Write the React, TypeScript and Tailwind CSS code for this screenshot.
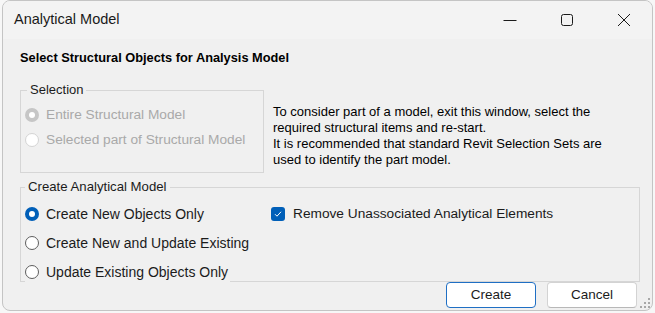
import { ReactNode } from "react";

const FONT = { fontFamily: '"Liberation Sans", Arial, sans-serif' };

function Radio({ checked, disabled }: { checked?: boolean; disabled?: boolean }) {
  if (checked) {
    return (
      <span
        className={`flex h-[14px] w-[14px] shrink-0 items-center justify-center rounded-full ${
          disabled ? "bg-[#c6c6c6]" : "bg-[#005fb8]"
        }`}
      >
        <span className="h-[6px] w-[6px] rounded-full bg-white" />
      </span>
    );
  }
  return (
    <span
      className={`h-[14px] w-[14px] shrink-0 rounded-full border bg-white ${
        disabled ? "border-[#d4d4d4]" : "border-[#5e5e5e]"
      }`}
    />
  );
}

function Option({ children, checked, disabled }: { children: ReactNode; checked?: boolean; disabled?: boolean }) {
  return (
    <div className="flex h-[20px] items-center gap-[7px]">
      <Radio checked={checked} disabled={disabled} />
      <span className={disabled ? "text-[13.7px] text-[#a9a9a9]" : "text-[14px] text-[#1b1b1b]"}>{children}</span>
    </div>
  );
}

export default function App() {
  return (
    <div className="h-[313px] w-[655px] bg-[#f7f7f7] px-[2px]" style={FONT}>
      <div className="relative h-[311px] overflow-hidden rounded-[8px] border border-[#c4c4c4] bg-[#f0f0f0]">
        {/* title bar */}
        <div className="flex h-[38px] items-center bg-[#f3f3f3]">
          <span className="flex-1 pl-[11px] text-[14.5px] text-[#1a1a1a]">Analytical Model</span>
          <div className="flex h-full">
            <div className="flex w-[57px] items-center justify-center">
              <svg width="14" height="14" viewBox="0 0 14 14">
                <path d="M0.5 7.5h13" stroke="#1a1a1a" strokeWidth="1" />
              </svg>
            </div>
            <div className="flex w-[57px] items-center justify-center">
              <svg width="14" height="14" viewBox="0 0 14 14">
                <rect x="1.5" y="1.5" width="11" height="11" rx="2" fill="none" stroke="#1a1a1a" strokeWidth="1" />
              </svg>
            </div>
            <div className="flex w-[57px] items-center justify-center">
              <svg width="14" height="14" viewBox="0 0 14 14">
                <path d="M1 1l12 12M13 1L1 13" stroke="#1a1a1a" strokeWidth="1" />
              </svg>
            </div>
          </div>
        </div>

        <div className="pl-[17px] pr-[12px] pt-[11px]">
          <h1 className="h-[16px] text-[12.8px] font-bold leading-[16px] text-black">
            Select Structural Objects for Analysis Model
          </h1>

          <div className="mt-[16px] flex items-start">
            <fieldset className="w-[244px] border border-[#d6d6d6] pb-[22px] pl-[4px] pt-[7px]">
              <legend className="ml-[2px] px-[3px] text-[13px] leading-[16px] text-[#1b1b1b]">Selection</legend>
              <div className="flex flex-col gap-[5px]">
                <Option checked disabled>
                  Entire Structural Model
                </Option>
                <Option disabled>Selected part of Structural Model</Option>
              </div>
            </fieldset>
            <p className="ml-[9px] mt-[22px] text-[13px] leading-[16px] text-black">
              To consider part of a model, exit this window, select the
              <br />
              required structural items and re-start.
              <br />
              It is recommended that standard Revit Selection Sets are
              <br />
              used to identify the part model.
            </p>
          </div>

          <fieldset className="mt-[6px] border border-[#d6d6d6] pl-[4px] pt-[8px]">
            <legend className="px-[3px] text-[13.2px] leading-[16px] text-[#1b1b1b]">Create Analytical Model</legend>
            <div className="flex">
              <div className="flex w-[246px] flex-col items-start gap-[7px]">
                <div className="flex h-[22px] items-center">
                  <Option checked>Create New Objects Only</Option>
                </div>
                <div className="flex h-[22px] items-center">
                  <Option>Create New and Update Existing</Option>
                </div>
                <div className="-mb-[2px] flex h-[22px] items-center bg-[#f0f0f0] pr-[2px]">
                  <Option>Update Existing Objects Only</Option>
                </div>
              </div>
              <div className="flex h-[22px] items-center gap-[8px]">
                <span className="flex h-[14px] w-[14px] items-center justify-center rounded-[3px] bg-[#005fb8]">
                  <svg width="10" height="10" viewBox="0 0 10 10">
                    <path d="M2 5.2l2 2 4-4.4" fill="none" stroke="white" strokeWidth="1" />
                  </svg>
                </span>
                <span className="text-[13.7px] text-[#1b1b1b]">Remove Unassociated Analytical Elements</span>
              </div>
            </div>
          </fieldset>

          <div className="flex justify-end gap-[11px] pr-[3px]">
            <button className="h-[26px] w-[90px] rounded-[4px] border border-[#1f6fc4] bg-white text-[13.5px] text-[#1b1b1b]">
              Create
            </button>
            <button className="h-[26px] w-[90px] rounded-[4px] border border-[#d3d3d3] border-b-[#b8b8b8] bg-white text-[13.5px] text-[#1b1b1b]">
              Cancel
            </button>
          </div>
        </div>

        {/* resize grip */}
        <svg className="absolute bottom-[1px] right-[1px]" width="11" height="11" viewBox="0 0 11 11">
          {[
            [8, 0],
            [8, 4],
            [4, 4],
            [8, 8],
            [4, 8],
            [0, 8],
          ].map(([x, y]) => (
            <rect key={`${x}-${y}`} x={x} y={y} width="2" height="2" fill="#a8a8a8" />
          ))}
        </svg>
      </div>
    </div>
  );
}
